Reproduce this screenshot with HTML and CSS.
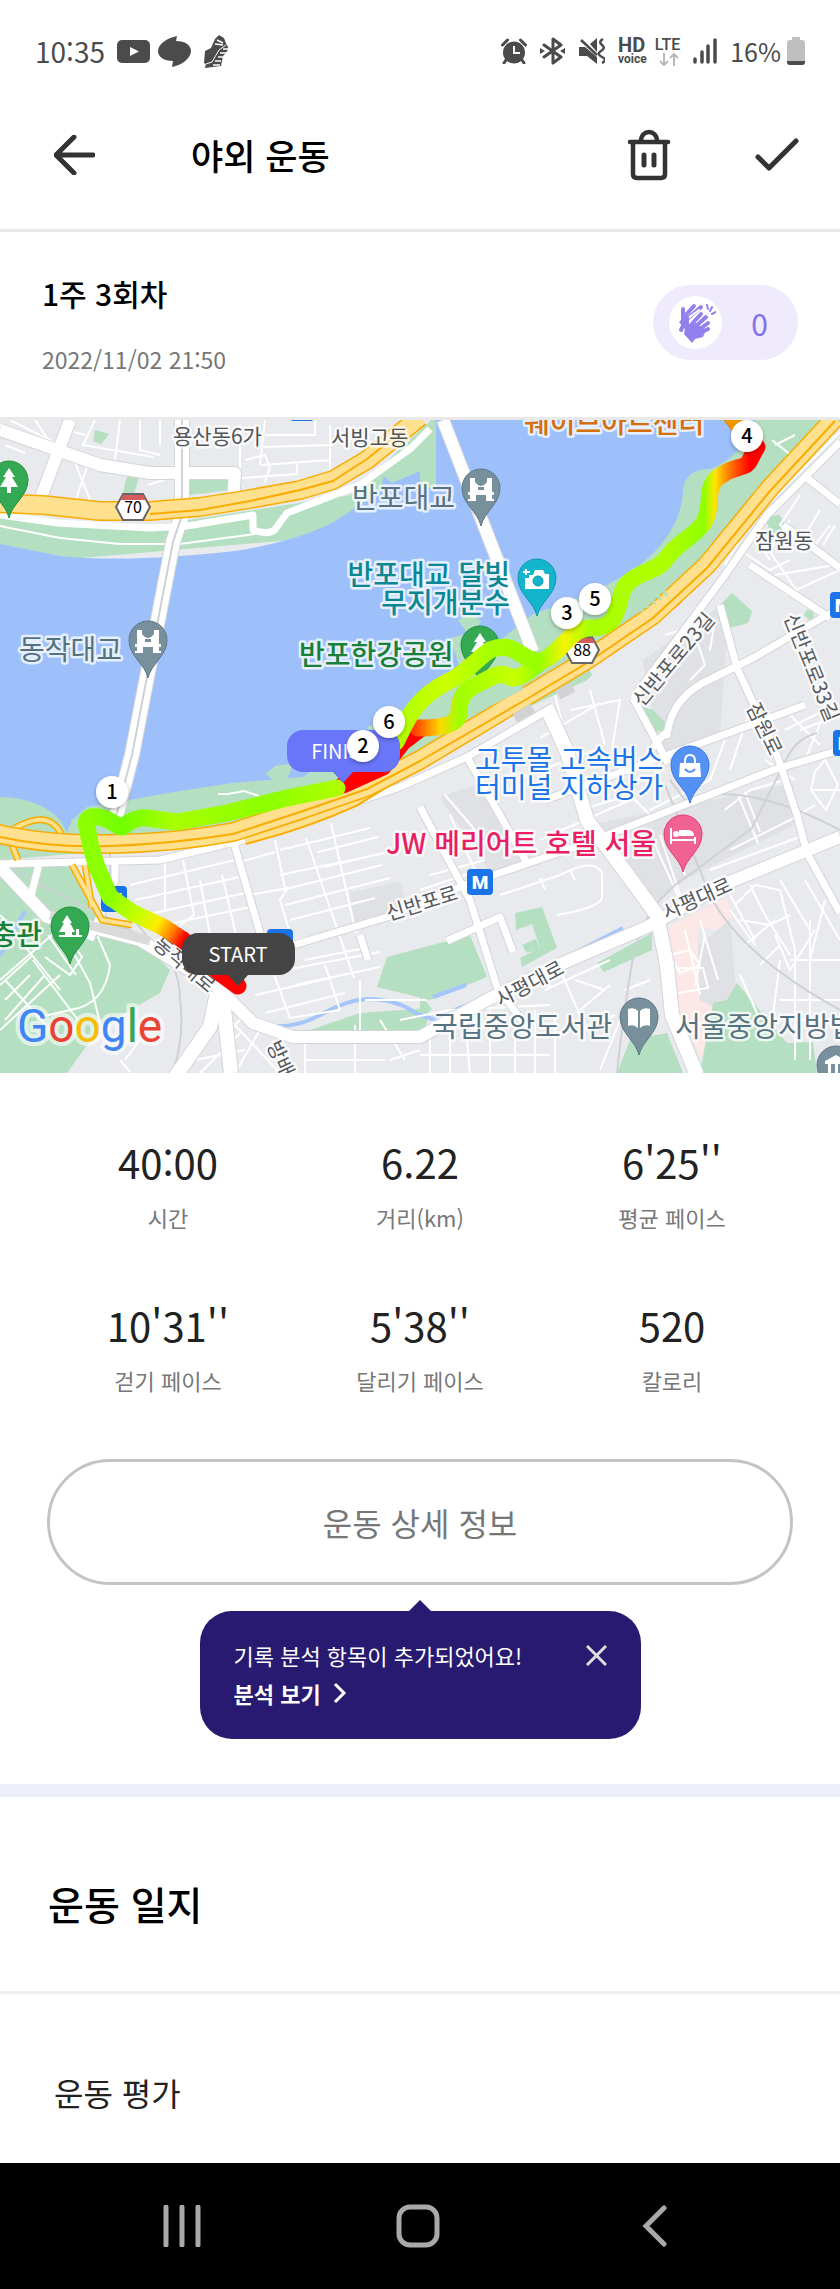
FILE: index.html
```
<!DOCTYPE html>
<html lang="ko">
<head>
  <meta charset="UTF-8" />
  <meta name="viewport" content="width=device-width, initial-scale=1.0"/>
  <title>야외 운동</title>
  <link rel="stylesheet" href="styles.css">
</head>

<body>
  <div class="status-bar">
    <div class="status-left">
      <span class="status-text">10:35</span>
      <svg width="33" height="23" viewBox="0 0 33 23"><rect width="33" height="23" rx="5" fill="#4b4b4b"/><path d="M13 7l9 4.500-9 4.500z" fill="#fff"/></svg>
      <svg width="33" height="31" viewBox="0 0 33 31"><path d="M19 0l-1 5c9 0 15 4 15 10 0 7-9 14-19 16l1-6C6 25 0 21 0 15 0 8 9 2 19 0z" fill="#4b4b4b"/></svg>
      <svg class="shoe" width="26" height="33" viewBox="0 0 26 33"><path d="M2 16l6-3 4-9 4-4 5 3 3 8-6 4-8 12-4 4-5-3z" fill="#4b4b4b"/><path d="M24 10c3 4-1 8-4 11l-2 10-16 2 1-5 6-2 7-11z" fill="#4b4b4b"/><path d="M20 14h6M17 18h7M15 22h5M12 26h6M10 30h7M14 5l6 3M12 9l8 1" stroke="#fff" stroke-width="1.500"/><path d="M3 29l6-2 7-12 7-5" fill="none" stroke="#fff"/></svg>
    </div>
    <div class="status-right">
      <svg width="26" height="26" viewBox="0 0 26 26"><circle cx="13" cy="14.500" r="11" fill="#4b4b4b"/><path d="M1.500 7l5-5M24.500 7l-5-5M5 22l-2 3M21 22l2 3" stroke="#4b4b4b" stroke-width="3" stroke-linecap="round"/><path d="M13 8v7h6" fill="none" stroke="#fff" stroke-width="2"/></svg>
      <svg width="25" height="28" viewBox="0 0 25 28"><path d="M4 8l17 12-8 6V2l8 6L4 20" fill="none" stroke="#4b4b4b" stroke-width="3" stroke-linejoin="round" stroke-linecap="round"/><path d="M0 11l5 3-5 3zM25 11l-5 3 5 3z" fill="#4b4b4b"/></svg>
      <svg width="27" height="26" viewBox="0 0 27 26"><path d="M1 9h6l12 10v7L9 18H1zM12 6l7-6v14z" fill="#4b4b4b"/><path d="M3 2l16 15" stroke="#4b4b4b" stroke-width="2.500"/><path d="M25 1q-5 3-1 6t-1 6 1 6 0 6" fill="none" stroke="#4b4b4b" stroke-width="2.500"/></svg>
      <div class="hd">HD<small>voice</small></div>
      <div class="lte">LTE
        <svg width="20" height="13" viewBox="0 0 20 13"><path d="M5 0v12M1 8l4 4 4-4M15 13V1M11 5l4-4 4 4" fill="none" stroke="#b8b8b8" stroke-width="2"/></svg>
      </div>
      <svg width="24" height="26" viewBox="0 0 24 26"><path d="M2 21v3M9 14v10M15 8v16M22 2v22" stroke="#4b4b4b" stroke-width="3.500" stroke-linecap="round"/></svg>
      <div class="battery">
        <span class="status-text">16%</span>
        <svg width="18" height="28" viewBox="0 0 18 28"><path d="M5 0h8v3h2q3 0 3 3v19q0 3-3 3H3q-3 0-3-3V6q0-3 3-3h2z" fill="#bfbfbf"/><path d="M0 24h18v1q0 3-3 3H3q-3 0-3-3z" fill="#4b4b4b"/></svg>
      </div>
    </div>
  </div>

  <header class="header">
    <button class="icon-button" aria-label="뒤로">
      <svg width="41" height="40" viewBox="0 0 41 40"><path d="M39 20H3M20 2L2 20l18 18" fill="none" stroke="#333" stroke-width="5" stroke-linecap="round" stroke-linejoin="round"/></svg>
    </button>
    <h1 class="header-title">야외 운동</h1>
    <button class="icon-button" aria-label="삭제">
      <svg width="44" height="52" viewBox="0 0 44 52"><path d="M3 13h38M6 13v32q0 4 4 4h24q4 0 4-4V13M14 12c0-12 16-12 16 0" fill="none" stroke="#333" stroke-width="4.500" stroke-linecap="round"/><path d="M17 26v10M27 26v10" stroke="#333" stroke-width="5" stroke-linecap="round"/></svg>
    </button>
    <button class="icon-button" aria-label="완료">
      <svg width="44" height="34" viewBox="0 0 44 34"><path d="M3 19l11 11L41 3" fill="none" stroke="#333" stroke-width="5" stroke-linecap="round" stroke-linejoin="round"/></svg>
    </button>
  </header>

  <main>
    <section class="summary">
      <div>
        <h2 class="summary-title">1주 3회차</h2>
        <div class="summary-date">2022/11/02 21:50</div>
      </div>
      <button class="clap" aria-label="응원 0">
        <span class="clap-icon">
          <svg width="40" height="40" viewBox="0 0 40 40" fill="none" stroke="#9280ee" stroke-linecap="round">
            <path d="M5 27l2-4V6M7 15L18 3M10 17L25 4" stroke-width="4"/>
            <path d="M3 19l4-4 3 2v10z" fill="#9280ee" stroke="none"/>
            <path d="M11 16l12-9" stroke="#fff" stroke-width="2"/>
            <path d="M11 15v11M14 23L25 11M18 25L30 14M20 29l12-9M20 32l12-6" stroke-width="4"/>
            <path d="M9 25l9-6 12 8-3 7-8 2-3 4-8-9z" fill="#9280ee" stroke="none"/>
            <path d="M31 2l1 4M36 4l-2 4M40 9l-4 2" stroke-width="2"/>
          </svg>
        </span>
        <span class="clap-count">0</span>
      </button>
    </section>

    <svg class="map" viewBox="0 0 840 653" role="img" aria-label="운동 경로 지도">
      <defs>
        <linearGradient id="start-route" gradientUnits="userSpaceOnUse" x1="110" y1="477" x2="183" y2="520">
          <stop offset="0" stop-color="#8cff00"/><stop offset=".4" stop-color="#c8ff00"/><stop offset=".65" stop-color="#ffec00"/><stop offset=".85" stop-color="#ff7a00"/><stop offset="1" stop-color="#f00"/>
        </linearGradient>
        <linearGradient id="river-route" gradientUnits="userSpaceOnUse" x1="87" y1="0" x2="343" y2="0">
          <stop offset="0" stop-color="#8aff00"/><stop offset=".14" stop-color="#72ff00"/><stop offset=".33" stop-color="#a8ff00"/><stop offset=".7" stop-color="#8cff00"/><stop offset="1" stop-color="#b0ff00"/>
        </linearGradient>
        <linearGradient id="upper-route" gradientUnits="userSpaceOnUse" x1="400" y1="0" x2="750" y2="0">
          <stop offset="0" stop-color="#b0ff00"/><stop offset=".13" stop-color="#ccff00"/><stop offset=".25" stop-color="#a8ff00"/><stop offset=".4" stop-color="#98ff00"/><stop offset=".47" stop-color="#f4f400"/><stop offset=".54" stop-color="#a8ff00"/><stop offset=".75" stop-color="#b0ff00"/><stop offset=".87" stop-color="#90ff00"/><stop offset=".9" stop-color="#ffe600"/><stop offset=".94" stop-color="#ff7a00"/><stop offset="1" stop-color="#f00"/>
        </linearGradient>
        <linearGradient id="lower-route" gradientUnits="userSpaceOnUse" x1="415" y1="0" x2="540" y2="0">
          <stop offset="0" stop-color="#ff4000"/><stop offset=".2" stop-color="#ffd800"/><stop offset=".35" stop-color="#a0ff00"/><stop offset=".8" stop-color="#c8ff00"/><stop offset="1" stop-color="#90ff00"/>
        </linearGradient>
        <filter id="marker-shadow" x="-30%" y="-30%" width="160%" height="170%"><feDropShadow dx="0" dy="2" stdDeviation="2" flood-opacity=".3"/></filter>
      </defs>

      <rect class="land" width="840" height="653"/>

      <!-- blocks -->
      <path class="block" d="M600 403l193-40 5 40-110 55-30 25zM640 225l90-60-10 150-60 20zM350 473l50-12 10 35-55 10zM680 540l50-40 8 90-30 20zM440 377l50 75 45-12-60-75z"/>
      <path class="hospital" d="M667 507l60-30 5 20-15 13-20-3 3 73 13 7 4 43-17 7-28-64z"/>
      <path class="park" d="M190 48l40-1v23l-40 5zM130 45l12 2-9 31-10-6zM95 10l14 4-8 10-8-3z"/>

      <!-- han river and its banks -->
      <path class="park" d="M0 98l150 8 200-31 90-83h60v110L0 145z"/>
      <path class="park" d="M840 0H700L300 340 0 365v75l240-20 347-160 253-245z"/>
      <path class="water" d="M0 124l60 12q70 7 175-5c50-8 85-20 105-33l45-30h51V0h319C748 20 735 40 710 49 690 49 684 60 683 70 682 100 665 125 640 145 600 172 570 182 533 194L503 218 475 238 440 266 400 300 373 306 303 357 233 363 167 373 130 380 87 387 72 400 67 412 60 400Q40 378 0 377z"/>
      <path class="water" d="M384 56l8 7 28-12v15l-40 6z"/>
      <path class="park" d="M265 354l10-8 18-3-6 18-10 1zM305 348l28-2-3 8-14 5zM366 308l35-19 4 5-25 16zM458 200l15-8 8 10-12 14zM450 218l20-5 16 12-25 26z"/>
      <path class="land" d="M587 245l120-110 133-133v100L600 270z"/>
      <path class="park" d="M765 97l14-2 8 10-7 12-10-6zM720 185l12-12 20 18-4 12-26 7zM643 287l10 3 20 20-28 2zM804 195l8-12 3 22z"/>
      <path class="road-thin" d="M0 106l60 12 60 6h60l75-10M218 374l10 0 16-3 15 5M772 20l30 24M775 25l20-10M840 12l-70 70-10 10"/>

      <!-- southern parks -->
      <path class="park" d="M0 443h72l18 44 37 20 43 43-10 23-60 34-33 46H0z"/>
      <path class="park" d="M387 537l83-22 17 42-57 23-53-13zM515 493l27-6 15 41-35 19-2-9 20-10-8-24-16 6zM522 525l14-6 4 10-13 4zM597 543l55-30v17l-48 22zM617 653l13-33 37-7 16 40zM700 653l13-70 14-3 10-17 50 60 26-1 4 31zM310 610l50-17 70-5-5 22zM420 575l12 14-12 10z"/>
      <path class="stream" d="M0 536l25-45M272 606q25 2 50-12t45-15q30 0 50 15l15 5 62-25M433 577l33-12M559 541l64-33"/>

      <!-- small streets -->
      <g class="road-thin">
        <path d="M0 5l30 12M5 25l20 8M10 0l60 30 20 50M35 0l20 30M65 10l20 5M95 0l-12 25 70 12M120 0l-5 40M140 0v30l20 5M160 0v25M75 82l12-35M143 58l30-12M148 65l25-8"/>
        <path d="M240 5v57M265 0l-5 45M315 0v15h-50M262 27l70-2M262 45l68-5M330 5v50M242 58l55-4v-10M245 40l20-5 5 12-5 15"/>
        <path d="M0 495q12 10 0 20M0 560l60-52 30 55 10 40M5 600l40-45M20 520l40 50M33 535l-33 30M48 515l28 40M0 610l60-55M30 555l-25 25M33 540l45 60M95 510l15 35q-5 40-40 45l-30 7M5 560l50 55M60 505l22 32-12 18-25-18"/>
        <path d="M130 465l105-25M135 480l105-23M145 495l100-22M150 508l105-22M165 440v52M183 440l11 55-16 12M200 460l10 55M222 455l14 60M240 442l35-10M275 420l10 48M306 418l48 140M331 403l25 110M250 475l38-7-8 12 12 40M280 455l105-22M282 470l100-25M285 485l105-27M290 500l85-22M318 432l60-15M325 447l62-15M280 430l90-22M295 520l65-15M305 540l60-12M255 575l80-18M265 593l80-20M285 550l95-18M295 565l85-18M325 545l15 45-50 8-20-55"/>
        <path d="M500 475l60-20q35-18 42-2v25q-3 10-45 17M540 458l5 12M570 450l5 10M430 455l55-15M420 470l60-20M450 395l25 55M445 375l30 35M540 318l60-35M555 275l15 60M570 290l50-10-8 50M590 270l15 55M515 360l80-30M540 420l90-40M545 435l80-28M580 390l50-15 20 20"/>
        <path d="M755 110l55 80M770 140l-20-30M760 85l-35 60M790 100l-20 30M800 75l-20 30 35 20 15-20M820 90l-15 25M835 105l-12 20M775 155l60-10M785 175l55-25M740 130l30 20 20-10M690 160l60-60M665 215l50-15-5 30M690 200l15 45-15 15M730 350l20-60M725 390l25-20 35-10M650 390l60-30 15-40M765 340l30 20M800 310l40-15M790 295l30 30M785 310l50-25M830 280l-25 60"/>
        <path d="M815 352l10-12 13 25-12 25-15-20zM810 370h30M738 375l20 48M745 372l15 40M730 430l60-30 25-15M660 415l20 60M655 425l25 55M665 405l20 50M710 450l95-35M715 465l90-40M670 535l20-5 10 15-20 8zM675 548h28l5 20-30 5M700 500l18 60M685 510l15 65M705 515l-10 50"/>
        <path d="M735 485l20-20 25 5 15 60M750 465l15 30 25 40M740 500l30 5 20-10M755 520l-25-45M775 515l15 35 25-40M745 525l30-25M760 545l20-20M780 540l-10 80M795 530v110M810 500v140M790 540h50M780 580h60M795 600h45M825 480l-15 60M730 490l25 35M805 460l35 60M780 460l30 50M760 600l-20-45M800 420l20 40"/>
        <path d="M420 635h130M430 655v-45M450 655v-60M470 655l-5-60M490 655v-75M515 655v-70M535 655v-65M555 655v-60M400 600l50-10 100-5M560 550l20 45M545 570l65-30M575 560l30 10M580 590l30-25M585 610l30-15M600 650l20-50M625 570l25-10M640 590l15 5"/>
        <path d="M305 610v43M355 605v48M305 640h80M230 600l50 53M250 590l-20 20M195 640l50-10M200 653l40-40M260 610l-25 43M120 640l10 12M140 620l-15 20M380 600l25 40M360 560v50M365 580h60M390 640l30-10"/>
      </g>

      <!-- railway -->
      <path class="rail" d="M0 440l40 25 110 55q30 20 30 60 5 40-8 73M617 653q5-50 15-110t60-90l60-45 35-70q10-20 30-25M665 365l45 110q30 60 130 115M670 360l15 20q60-20 155 30M110 430v40l40 50"/>

      <!-- roads -->
      <g class="road-edge">
        <path class="w16" d="M182 0v95l-9 27-41 213-17 65"/>
        <path class="w12" d="M443 0l90 232"/>
        <path class="w12" d="M0 10l100 35 50 8h85l-2 28M70 0L40 80"/>
        <path class="w12" d="M0 447l47 50 43 10 50 13 77 47 36 36 40 14h127l67-37 76-37 84-36 80-44 113-46"/>
        <path class="w16" d="M217 573l-7 34-35 50M223 580l8 73"/>
        <path class="w16" d="M547 288l20 44 20 68 70 95 10 50 5 50 25 60"/>
        <path class="w8" d="M233 420l27 93M0 444l160-4 83-20 157-53 67-30 86-50M115 440v20l-25 60M40 440l-10 40"/>
        <path class="w8" d="M287 527l100-30 83-34 117-40 186-73 67-20M420 387l50 93 27 87 30 40M467 337l60 106M633 278l35 65M840 22l-73 73-47 67-87 116"/>
        <path class="w8" d="M720 185l17 63 40 87 20 60 10 38 33 60M653 328q14-20 14-13 5-40 46-57l40-20 74-43 20-8M750 145l80 53M783 105l57 43M807 58l33 26M545 380l260-95"/>
        <path class="w8" d="M447 521l53-24 13 35M360 515l8 25"/>
      </g>
      <g class="road">
        <path class="w16" d="M182 0v95l-9 27-41 213-17 65"/>
        <path class="w12" d="M443 0l90 232"/>
        <path class="w12" d="M0 10l100 35 50 8h85l-2 28M70 0L40 80"/>
        <path class="w12" d="M0 447l47 50 43 10 50 13 77 47 36 36 40 14h127l67-37 76-37 84-36 80-44 113-46"/>
        <path class="w16" d="M217 573l-7 34-35 50M223 580l8 73"/>
        <path class="w16" d="M547 288l20 44 20 68 70 95 10 50 5 50 25 60"/>
        <path class="w8" d="M233 420l27 93M0 444l160-4 83-20 157-53 67-30 86-50M115 440v20l-25 60M40 440l-10 40"/>
        <path class="w8" d="M287 527l100-30 83-34 117-40 186-73 67-20M420 387l50 93 27 87 30 40M467 337l60 106M633 278l35 65M840 22l-73 73-47 67-87 116"/>
        <path class="w8" d="M720 185l17 63 40 87 20 60 10 38 33 60M653 328q14-20 14-13 5-40 46-57l40-20 74-43 20-8M750 145l80 53M783 105l57 43M807 58l33 26M545 380l260-95"/>
        <path class="w8" d="M447 521l53-24 13 35M360 515l8 25"/>
        <path class="w8" d="M0 95l57 8 93 5 37-2 66-11v15q20 7 25-5l9-12 73-28 50-36 20-20"/>
      </g>
      <path class="rail" d="M182 0v95l-9 27-41 213-17 65"/>
      <path class="rail-wide" d="M50 495l100 26"/>

      <!-- highways -->
      <g fill="none" stroke-linejoin="round">
        <path d="M15 408q35-20 47 8M10 420l8 20M72 445l30 55 30 5M85 445l7 42" stroke="#f9ab00" stroke-width="7"/>
        <path d="M15 408q35-20 47 8M10 420l8 20M72 445l30 55 30 5M85 445l7 42" stroke="#ffe08f" stroke-width="4"/>
        <path d="M245 420q60-15 110-38l65-40M560 262l65-45 50-35 80-95" stroke="#f9ab00" stroke-width="10"/>
        <path d="M245 420q60-15 110-38l65-40M560 262l65-45 50-35 80-95" stroke="#ffe08f" stroke-width="6"/>
        <path class="hw-edge" d="M-5 83l48 2 57 6h50l50-4 50-8 50-9 33-10 34-20 53-43M-5 413q50 12 115 11t123-12l67-22 67-23 53-27 100-60 67-40 66-45 54-50 63-77 65-70"/>
        <path class="hw" d="M-5 83l48 2 57 6h50l50-4 50-8 50-9 33-10 34-20 53-43M-5 413q50 12 115 11t123-12l67-22 67-23 53-27 100-60 67-40 66-45 54-50 63-77 65-70"/>
        <path d="M150 94l50-4 50-9 50-11 33-9 34-22 40-32M0 417q50 11 110 9t123-12l67-22 67-23 53-28 100-58 67-40 66-45 54-50 63-77 65-70" stroke="#f9ab00" stroke-width="2"/>
      </g>
      <path d="M515 298l18-10M558 275l15-8" stroke="#d2d2d4" stroke-width="10"/>
      <path class="park-line" d="M470 290l40-20M468 296l55-28M635 180l8 12M641 176l8 12M647 172l8 12M653 168l8 12M659 164l8 12"/>

      <!-- road shields -->
      <g class="shield" transform="translate(133 87)"><path d="M-10-13h20l7 13-7 13h-20l-7-13z"/><path class="shield-top" d="M-10-12h20l3 5h-26z"/><text y="6">70</text></g>
      <g class="shield" transform="translate(582 230)"><path d="M-10-13h20l7 13-7 13h-20l-7-13z"/><path class="shield-top" d="M-10-12h20l3 5h-26z"/><text y="6">88</text></g>

      <!-- subway -->
      <g class="subway">
        <g transform="translate(480 462)"><rect x="-13" y="-13" width="26" height="26" rx="4"/><text y="7">M</text></g>
        <g transform="translate(843 185)"><rect x="-13" y="-13" width="26" height="26" rx="4"/><text y="7">M</text></g>
        <g transform="translate(846 323)"><rect x="-13" y="-13" width="26" height="26" rx="4"/><text y="7">M</text></g>
        <g transform="translate(114 479)"><rect x="-13" y="-13" width="26" height="26" rx="4"/><text y="7">M</text></g>
        <rect x="267" y="509" width="26" height="26" rx="4"/>
        <rect x="291" y="-10" width="22" height="11" rx="2"/>
      </g>

      <!-- place pins, origin at the tip -->
      <g class="pin pin-green" transform="translate(9 98)"><path d="M0 0C-3-14-19-22-19-38a19 19 0 0 1 38 0C19-22 3-14 0 0z"/><path class="glyph" d="M0-50l6 9h-3l6 10h-7v6h-4v-6h-7l6-10h-3z"/></g>
      <g class="pin pin-green" transform="translate(480 263)"><path d="M0 0C-3-14-19-22-19-38a19 19 0 0 1 38 0C19-22 3-14 0 0z"/><path class="glyph" d="M0-50l6 9h-3l6 10h-7v6h-4v-6h-7l6-10h-3z"/></g>
      <g class="pin pin-green" transform="translate(70 544)"><path d="M0 0C-3-14-19-22-19-38a19 19 0 0 1 38 0C19-22 3-14 0 0z"/><path class="glyph" d="M-3-49l5 8h-2l5 9h-3v3h4v-6h3v6h3v2h-23v-2h6v-3h-6l5-9h-2z"/></g>
      <g class="pin pin-gray" transform="translate(148 258)"><path d="M0 0C-3-14-19-22-19-38a19 19 0 0 1 38 0C19-22 3-14 0 0z"/><path class="glyph" d="M-11-48h5v4q6 8 12 0v-4h5v14h2v3h-2v4h2v2h-8v-6h-10v6h-8v-2h2v-4h-2v-3h2zM-3-36h6v-3h-6z"/></g>
      <g class="pin pin-gray" transform="translate(481 106)"><path d="M0 0C-3-14-19-22-19-38a19 19 0 0 1 38 0C19-22 3-14 0 0z"/><path class="glyph" d="M-11-48h5v4q6 8 12 0v-4h5v14h2v3h-2v4h2v2h-8v-6h-10v6h-8v-2h2v-4h-2v-3h2zM-3-36h6v-3h-6z"/></g>
      <g class="pin pin-teal" transform="translate(537 196)"><path d="M0 0C-3-14-19-22-19-38a19 19 0 0 1 38 0C19-22 3-14 0 0z"/><path class="glyph" d="M-12-38h4v-3h4l2-5h8l2 4h4v15h-24zM-12-47h2v2h3v2h-3v2h-2v-2h-2v-2h2z"/><circle cx="1" cy="-35" r="5"/></g>
      <g class="pin pin-blue" transform="translate(690 383)"><path d="M0 0C-3-14-19-22-19-38a19 19 0 0 1 38 0C19-22 3-14 0 0z"/><path class="glyph" d="M-10-40h20l1 14h-22z"/><path d="M-5-40v-2q0-6 5-6t5 6v2" fill="none" stroke="#fff" stroke-width="2"/><path class="smile" d="M-5-34q5 6 10 0"/></g>
      <g class="pin pin-pink" transform="translate(683 452)"><path d="M0 0C-3-14-19-22-19-38a19 19 0 0 1 38 0C19-22 3-14 0 0z"/><path class="glyph" d="M-13-44h2v11h22v-2h2v7h-2v-3h-22v3h-2zM-4-42h9q6 0 6 6h-15z"/><circle class="glyph" cx="-7" cy="-38" r="3"/></g>
      <g class="pin pin-gray" transform="translate(639 635)"><path d="M0 0C-3-14-19-22-19-38a19 19 0 0 1 38 0C19-22 3-14 0 0z"/><path class="glyph" d="M-11-46q7-2 10 2v17q-4-4-10-2zM11-46q-7-2-10 2v17q4-4 10-2z"/></g>
      <g class="pin pin-gray" transform="translate(836 683)"><path d="M0 0C-3-14-19-22-19-38a19 19 0 0 1 38 0C19-22 3-14 0 0z"/><path class="glyph" d="M0-48l11 6v3h-2v12h-3v-12h-4v12h-3v-12h-4v12h-3v-12h-3v-3z"/></g>
      <g class="pin pin-orange" transform="translate(736 20)"><path d="M0 0C-3-14-19-22-19-38a19 19 0 0 1 38 0C19-22 3-14 0 0z"/></g>

      <!-- labels -->
      <g class="label area">
        <text x="173" y="24">용산동6가</text>
        <text x="331" y="25">서빙고동</text>
        <text x="755" y="128">잠원동</text>
      </g>
      <g class="label street">
        <text transform="translate(679 244) rotate(-50)">신반포로23길</text>
        <text transform="translate(805 250) rotate(68)">신반포로33길</text>
        <text transform="translate(758 312) rotate(64)">잠원로</text>
        <text transform="translate(424 490) rotate(-17)">신반포로</text>
        <text transform="translate(700 485) rotate(-24)">사평대로</text>
        <text transform="translate(533 570) rotate(-28)">사평대로</text>
        <text transform="translate(180 550) rotate(40)">동작대로</text>
        <text transform="translate(278 650) rotate(65)">방배로</text>
      </g>
      <g class="label place">
        <text class="gray" x="352" y="88">반포대교</text>
        <text class="gray" x="19" y="240">동작대교</text>
        <text class="teal" x="510" y="165" text-anchor="end">반포대교 달빛</text>
        <text class="teal" x="510" y="193" text-anchor="end">무지개분수</text>
        <text class="green" x="299" y="245">반포한강공원</text>
        <text class="orange" x="524" y="13">웨이브아트센터</text>
        <text class="blue" x="475" y="350">고투몰 고속버스</text>
        <text class="blue" x="475" y="378">터미널 지하상가</text>
        <text class="pink" x="386" y="434">JW 메리어트 호텔 서울</text>
        <text class="green" x="42" y="525" text-anchor="end">충관</text>
        <text class="gray" x="432" y="617">국립중앙도서관</text>
        <text class="gray" x="675" y="617">서울중앙지방법원</text>
      </g>
      <text class="google" x="17" y="622"><tspan fill="#4285f4">G</tspan><tspan fill="#ea4335">o</tspan><tspan fill="#fbbc04">o</tspan><tspan fill="#4285f4">g</tspan><tspan fill="#34a853">l</tspan><tspan fill="#ea4335">e</tspan></text>

      <!-- route -->
      <g class="route">
        <path d="M238 566l-18-13-37-33" stroke="#f00"/>
        <path d="M343 365l40-18 20-25 17-13" stroke="#f00"/>
        <path d="M418 308C440 308 460 306 459 290 461 270 470 268 482 262 492 257 500 250 512 258 522 258 530 250 540 242" stroke="url(#lower-route)"/>
        <path d="M396 322C405 305 412 280 447 262 465 255 475 240 490 230 515 220 520 240 540 242 560 235 570 208 590 208 615 208 615 195 620 180 625 150 655 155 665 140 680 120 690 120 703 104 715 85 702 65 722 55 735 45 745 50 750 40 753 34 755 30 757 27" stroke="url(#upper-route)"/>
        <path d="M87 407C84 395 95 396 103 398 112 400 118 408 123 407 130 400 140 397 147 398L177 402 227 393 287 378 337 368" stroke="url(#river-route)"/>
        <path d="M183 520l-20-13-30-14-23-16-13-30-6-20-4-20" stroke="url(#start-route)"/>
      </g>

      <g>
        <path d="M303 310h81a16 16 0 0 1 16 16v10a16 16 0 0 1-16 16h-31l-10 11-10-11h-30a16 16 0 0 1-16-16v-10a16 16 0 0 1 16-16z" fill="#6a76fa"/>
        <text class="bubble-text" x="343" y="339">FINISH</text>
        <path d="M198 513h81a16 16 0 0 1 16 16v10a16 16 0 0 1-16 16h-31l-10 11-10-11h-30a16 16 0 0 1-16-16v-10a16 16 0 0 1 16-16z" fill="#444"/>
        <text class="bubble-text" x="238" y="542">START</text>
      </g>
      <g class="marker">
        <g transform="translate(112 372)"><circle r="16"/><text y="7">1</text></g>
        <g transform="translate(389 302)"><circle r="16"/><text y="7">6</text></g>
        <g transform="translate(363 326)"><circle r="16"/><text y="7">2</text></g>
        <g transform="translate(567 193)"><circle r="16"/><text y="7">3</text></g>
        <g transform="translate(595 179)"><circle r="16"/><text y="7">5</text></g>
        <g transform="translate(747 16)"><circle r="16"/><text y="7">4</text></g>
      </g>
    </svg>

    <section class="stats">
      <div class="stat"><div class="stat-value">40:00</div><div class="stat-label">시간</div></div>
      <div class="stat"><div class="stat-value">6.22</div><div class="stat-label">거리(km)</div></div>
      <div class="stat"><div class="stat-value">6'25''</div><div class="stat-label">평균 페이스</div></div>
      <div class="stat"><div class="stat-value">10'31''</div><div class="stat-label">걷기 페이스</div></div>
      <div class="stat"><div class="stat-value">5'38''</div><div class="stat-label">달리기 페이스</div></div>
      <div class="stat"><div class="stat-value">520</div><div class="stat-label">칼로리</div></div>
    </section>

    <div class="detail">
      <button class="detail-button">운동 상세 정보</button>
      <div class="tooltip">
        <div>
          <p class="tooltip-text">기록 분석 항목이 추가되었어요!</p>
          <a class="tooltip-link" href="#">분석 보기
            <svg width="14" height="22" viewBox="0 0 14 22"><path d="M2 2l9 9-9 9" fill="none" stroke="#fff" stroke-width="3"/></svg>
          </a>
        </div>
        <button class="icon-button tooltip-close" aria-label="닫기">
          <svg width="21" height="21" viewBox="0 0 21 21"><path d="M1 1l19 19M20 1L1 20" stroke="#ddd" stroke-width="3"/></svg>
        </button>
      </div>
    </div>

    <section class="journal">
      <h2 class="journal-title">운동 일지</h2>
      <h3 class="journal-item">운동 평가</h3>
    </section>
  </main>

  <nav class="nav-bar">
    <button class="icon-button" aria-label="최근 앱">
      <svg width="38" height="42" viewBox="0 0 38 42"><path d="M3 2v38M19 2v38M35 2v38" stroke="#a9a9a9" stroke-width="5" stroke-linecap="round"/></svg>
    </button>
    <button class="icon-button" aria-label="홈">
      <svg width="44" height="44" viewBox="0 0 44 44"><rect x="3" y="3" width="38" height="38" rx="11" fill="none" stroke="#a9a9a9" stroke-width="5"/></svg>
    </button>
    <button class="icon-button" aria-label="뒤로 가기">
      <svg width="25" height="42" viewBox="0 0 25 42"><path d="M22 3L4 21l18 18" fill="none" stroke="#a9a9a9" stroke-width="5" stroke-linecap="round"/></svg>
    </button>
  </nav>
</body>
</html>
```
FILE: styles.css
```
:root {
  --icon-color: #4b4b4b;
  --line-color: #e9e9e9;
  --muted: #777777;
  --navy: #281a70;
}
* {
  box-sizing: border-box;
}
body {
  margin: 0;
  background-color: #ffffff;
  color: #000000;
  font-family: "Noto Sans CJK KR", "Noto Sans", sans-serif;
}
h1, h2, h3, p {
  margin: 0;
  font-weight: 500;
}
svg {
  display: block;
  flex-shrink: 0;
}
button {
  font-family: inherit;
  cursor: pointer;
}
.icon-button {
  display: flex;
  align-items: center;
  justify-content: center;
  padding: 0;
  border: none;
  background: none;
}

/* status bar */
.status-bar {
  display: flex;
  justify-content: space-between;
  padding: 30px 35px 18px;
  color: var(--icon-color);
}
.status-left, .status-right {
  display: flex;
  align-items: center;
  height: 42px;
}
.status-left {
  gap: 8px;
}
.status-right {
  gap: 13px;
}
.status-left .status-text {
  margin-right: 4px;
}
.shoe {
  margin-left: 4px;
}
.status-text {
  font-size: 28px;
  line-height: 40px;
}
.battery {
  display: flex;
  align-items: center;
  gap: 6px;
}
.battery .status-text {
  font-size: 25px;
}
.hd, .lte {
  font-family: Roboto, sans-serif;
  font-weight: 700;
  font-size: 20px;
  line-height: 16px;
}
.hd small {
  display: block;
  font-size: 12px;
  line-height: 12px;
}
.lte {
  margin-left: -5px;
  font-size: 16px;
  font-weight: 500;
}
.lte svg {
  margin-left: 4px;
}

/* header */
.header {
  display: flex;
  align-items: center;
  gap: 84px;
  padding: 39px 41px 48px 54px;
  border-bottom: 3px solid var(--line-color);
}
.header-title {
  flex-grow: 1;
  margin-left: 12px;
  font-size: 35px;
  line-height: 52px;
}
.summary {
  display: flex;
  align-items: center;
  justify-content: space-between;
  padding: 36px 42px 40px;
  border-bottom: 3px solid var(--line-color);
}
.summary-title {
  font-size: 30px;
  line-height: 50px;
}
.summary-date {
  margin-top: 23px;
  color: var(--muted);
  font-size: 23px;
  line-height: 36px;
}
.clap {
  display: flex;
  align-items: center;
  gap: 29px;
  padding: 11px 30px 11px 16px;
  border: none;
  border-radius: 38px;
  background-color: #efebfd;
}
.clap-icon {
  display: grid;
  place-items: center;
  width: 53px;
  height: 53px;
  border-radius: 50%;
  background-color: #ffffff;
}
.clap-count {
  color: #8472e6;
  font-size: 30px;
  line-height: 40px;
}

/* map */
.map {
  width: 100%;
  height: auto;
  overflow: hidden;
}
.land { fill: #e8eaed; }
.block { fill: #e0e1e4; }
.hospital { fill: #fce8e6; }
.park { fill: #b5dfc1; }
.water { fill: #9dc0fa; }
.stream {
  fill: none;
  stroke: #a5c6fb;
  stroke-width: 4;
}
.road-thin {
  fill: none;
  stroke: #ffffff;
  stroke-width: 2;
}
.park-line {
  fill: none;
  stroke: #b5dfc1;
  stroke-width: 3;
}
.rail, .rail-wide {
  fill: none;
  stroke: #cfd1d5;
  stroke-width: 2;
}
.rail-wide {
  stroke: #dadada;
  stroke-width: 9;
}
.road, .road-edge {
  fill: none;
  stroke-linejoin: round;
}
.road { stroke: #ffffff; }
.road-edge { stroke: #d3d5d9; }
.road .w16 { stroke-width: 14; }
.road .w12 { stroke-width: 12; }
.road .w8 { stroke-width: 7; }
.road-edge .w16 { stroke-width: 16; }
.road-edge .w12 { stroke-width: 14; }
.road-edge .w8 { stroke-width: 9; }
.hw-edge {
  stroke: #f9ab00;
  stroke-width: 20;
}
.hw {
  stroke: #ffe08f;
  stroke-width: 17;
}
.shield path {
  fill: #ffffff;
  stroke: #666666;
  stroke-width: 2;
}
.shield .shield-top {
  fill: #d65b5b;
  stroke: none;
}
.shield text {
  font-size: 16px;
  text-anchor: middle;
}
.subway rect {
  fill: #1a73e8;
}
.subway text {
  fill: #ffffff;
  font-family: Roboto, sans-serif;
  font-size: 19px;
  font-weight: 900;
  text-anchor: middle;
}
.pin { stroke-width: 1; }
.pin .glyph {
  fill: #ffffff;
  stroke: none;
}
.pin-green { fill: #34a853; stroke: #23913f; }
.pin-gray { fill: #78909c; stroke: #5d7784; }
.pin-teal { fill: #12b5cb; stroke: #0c97a9; }
.pin-blue { fill: #5491f5; stroke: #3478e5; }
.pin-pink { fill: #f06292; stroke: #e43a74; }
.pin-orange { fill: #f29900; stroke: #e07f00; }
.smile {
  fill: none;
  stroke: #5491f5;
  stroke-width: 2;
}
.label text {
  paint-order: stroke;
  stroke: rgba(255, 255, 255, 0.75);
  stroke-width: 5px;
  stroke-linejoin: round;
}
.area {
  fill: #50555b;
  font-size: 21px;
  font-weight: 400;
}
.street {
  fill: #55585c;
  font-size: 20px;
  text-anchor: middle;
}
.place {
  font-size: 28px;
  font-weight: 500;
}
.gray { fill: #56717f; font-weight: 400; }
.teal { fill: #0b8793; }
.green { fill: #188038; }
.orange { fill: #d56e0c; }
.blue { fill: #1a73e8; font-weight: 400; }
.pink { fill: #e91e63; }
.google {
  font-family: Roboto, sans-serif;
  font-size: 46px;
  font-weight: 400;
  paint-order: stroke;
  stroke: rgba(255, 255, 255, 0.6);
  stroke-width: 8px;
  stroke-linejoin: round;
}
.route path {
  fill: none;
  stroke-width: 17;
  stroke-linecap: round;
  stroke-linejoin: round;
}
.bubble-text {
  fill: #ffffff;
  font-size: 20px;
  text-anchor: middle;
}
.marker circle {
  fill: #ffffff;
  filter: url(#marker-shadow);
}
.marker text {
  font-size: 20px;
  font-weight: 500;
  text-anchor: middle;
}

/* stats */
.stats {
  display: grid;
  grid-template-columns: repeat(3, 1fr);
  row-gap: 68px;
  padding: 64px 42px;
  text-align: center;
}
.stat-value {
  color: #222222;
  font-size: 40px;
  line-height: 50px;
}
.stat-label {
  margin-top: 15px;
  color: var(--muted);
  font-size: 22px;
  line-height: 30px;
}

/* detail button and tooltip */
.detail {
  padding: 0 47px 45px;
}
.detail-button {
  width: 100%;
  padding: 36px;
  border: 3px solid #c4c4c4;
  border-radius: 63px;
  background-color: #ffffff;
  color: var(--muted);
  font-size: 32px;
  line-height: 48px;
}
.tooltip {
  position: relative;
  display: flex;
  align-items: flex-start;
  justify-content: space-between;
  max-width: 441px;
  margin: 26px auto 0;
  padding: 25px 34px 27px;
  border-radius: 32px;
  background-color: var(--navy);
  color: #ffffff;
  font-size: 22px;
  line-height: 38px;
}
.tooltip::before {
  content: "";
  position: absolute;
  bottom: 100%;
  left: 50%;
  margin-left: -11px;
  border: 11px solid transparent;
  border-top: none;
  border-bottom-color: var(--navy);
}
.tooltip-text {
  font-weight: 400;
}
.tooltip-link {
  display: flex;
  align-items: center;
  gap: 12px;
  color: inherit;
  font-weight: 700;
  text-decoration: none;
}
.tooltip-close {
  height: 38px;
}

/* journal */
.journal {
  border-top: 13px solid #eceff8;
}
.journal-title {
  padding: 76px 48px 58px;
  border-bottom: 3px solid #ecf0f5;
  font-size: 39px;
  line-height: 60px;
}
.journal-item {
  padding: 74px 54px 46px;
  color: #222222;
  font-size: 32px;
  font-weight: 400;
  line-height: 49px;
}
.nav-bar {
  display: grid;
  grid-template-columns: repeat(3, 1fr);
  padding: 41px 68px 41px 64px;
  background-color: #000000;
}
```
